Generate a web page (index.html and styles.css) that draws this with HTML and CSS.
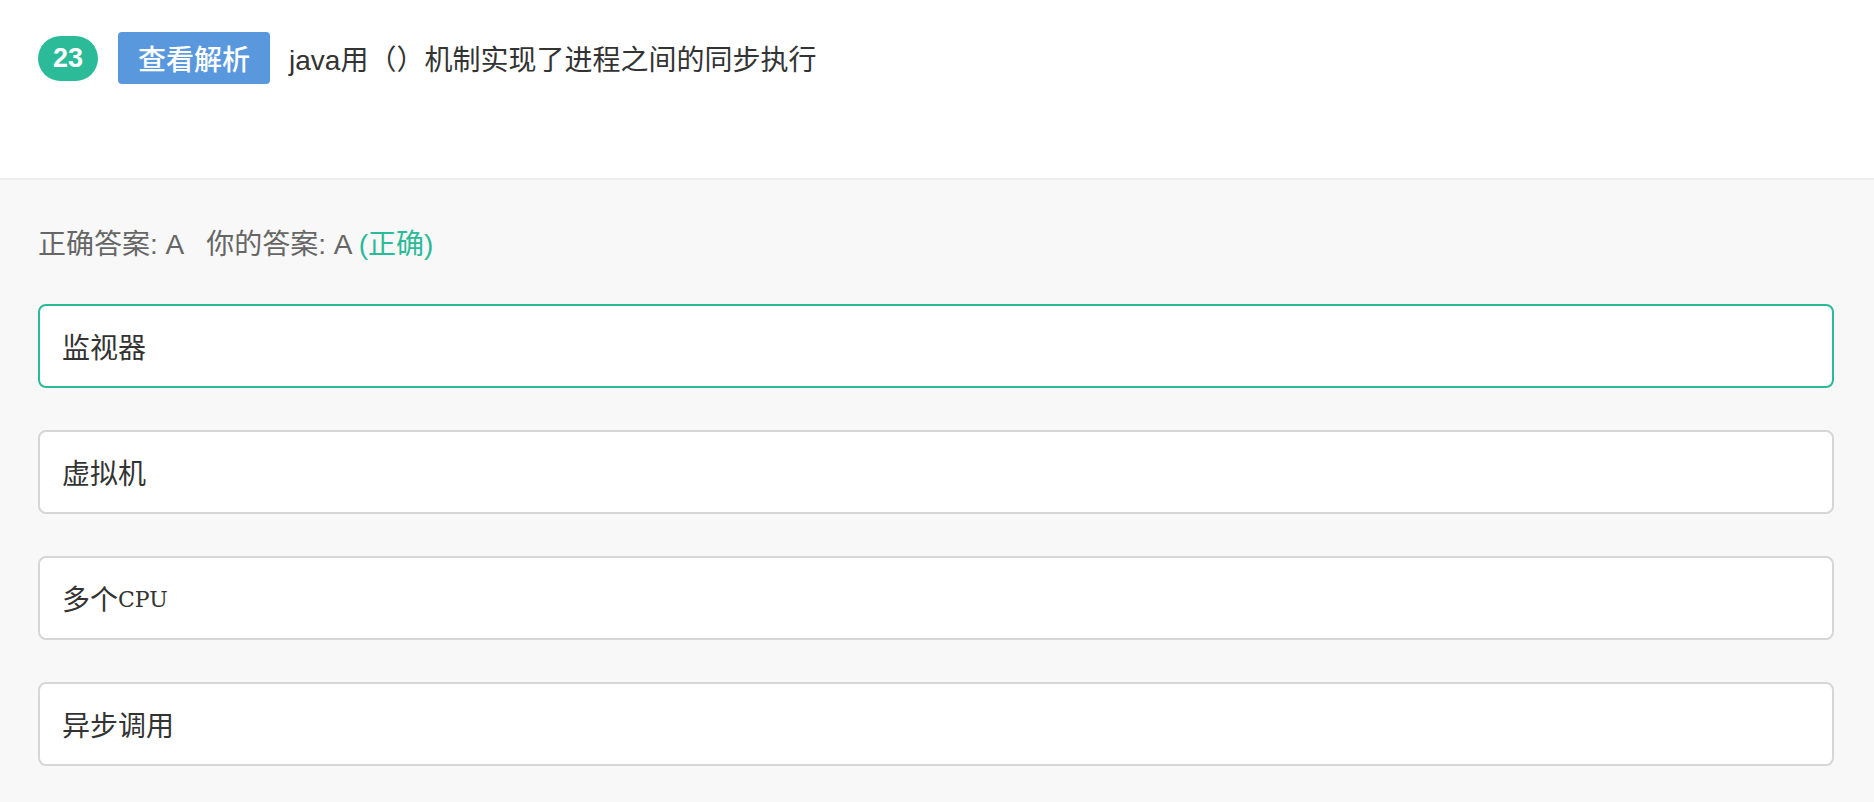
FILE: index.html
```html
<!DOCTYPE html>
<html lang="zh-CN">
<head>
<meta charset="utf-8">
<title>题目 23</title>
<link rel="stylesheet" href="styles.css">
</head>
<body>
<div class="header">
  <span class="num">23</span>
  <span class="btn">查看解析</span>
  <span class="question">java用（）机制实现了进程之间的同步执行</span>
</div>
<div class="body">
  <div class="answer">正确答案: A<span class="sep"></span>你的答案: A <span class="ok">(正确)</span></div>
  <div class="options">
    <div class="option correct">监视器</div>
    <div class="option">虚拟机</div>
    <div class="option">多个<span class="mono">CPU</span></div>
    <div class="option">异步调用</div>
  </div>
</div>
</body>
</html>
```

FILE: styles.css
```css
html, body {
  margin: 0;
  padding: 0;
  background: #f8f8f8;
  font-family: "Liberation Sans", "Noto Sans CJK SC", sans-serif;
}
.header {
  background: #ffffff;
  height: 180px;
  box-sizing: border-box;
  padding: 32px 38px 0 38px;
  border-bottom: 2px solid #eeeeee;
  display: flex;
  align-items: flex-start;
}
.header > span {
  height: 52px;
  display: flex;
  align-items: center;
}
.num {
  box-sizing: border-box;
  width: 60px;
  height: 45px !important;
  margin-top: 4px;
  border-radius: 23px;
  background: #2bbb98;
  color: #ffffff;
  font-size: 27px;
  font-weight: bold;
  justify-content: center;
  margin-right: 20px;
}
.btn {
  background: #5a98de;
  color: #ffffff;
  font-size: 28px;
  font-weight: 500;
  padding: 0 20px;
  border-radius: 4px;
  margin-right: 19px;
}
.question {
  font-size: 28px;
  color: #333333;
}
.body {
  padding: 45px 40px 0 38px;
}
.answer {
  font-size: 28px;
  line-height: 40px;
  color: #666666;
  height: 40px;
}
.sep {
  display: inline-block;
  width: 22px;
}
.ok {
  color: #2bbb98;
}
.options {
  margin-top: 39px;
  display: flex;
  flex-direction: column;
  gap: 42px;
}
.option {
  box-sizing: border-box;
  height: 84px;
  background: #ffffff;
  border: 2px solid #d6d6d6;
  border-radius: 8px;
  padding: 0 22px;
  display: flex;
  align-items: center;
  font-size: 28px;
  color: #333333;
}
.option.correct {
  border-color: #2bbb98;
}
.mono {
  font-family: "DejaVu Serif", serif;
  font-size: 22px;
  padding-top: 3px;
}
```
